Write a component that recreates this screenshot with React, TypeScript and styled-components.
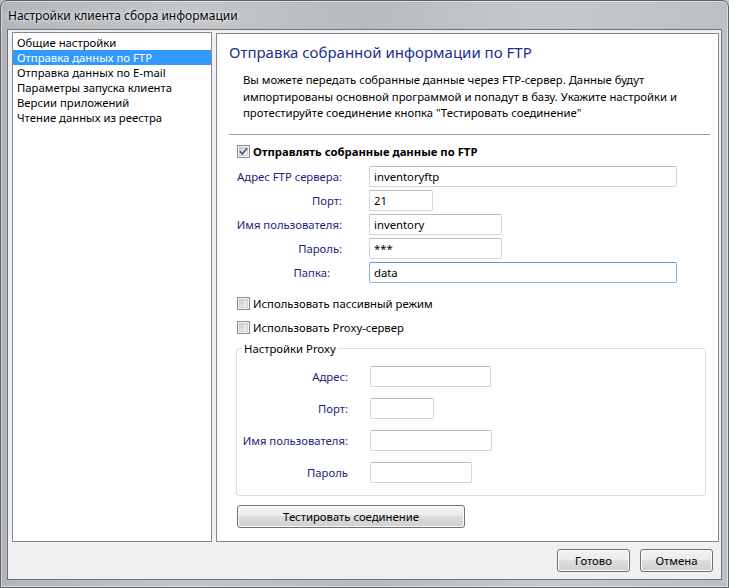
import React from "react";
import styled, { createGlobalStyle } from "styled-components";

const Global = createGlobalStyle`
  html, body { margin: 0; padding: 0; background: #bcc0c4; }
  body { font-family: "Noto Sans", "Open Sans", sans-serif; font-size: 11.3px; color: #000; }
  #root { width: 729px; height: 588px; }
  * { box-sizing: border-box; }
`;

const Window = styled.div`
  width: 729px;
  height: 588px;
  border: 1px solid #5f6468;
  border-radius: 7px 7px 0 0;
  background: linear-gradient(90deg, #b2b6ba 0%, #c3c6c9 25%, #b7bbbf 50%, #c6c9cc 75%, #bcc0c3 100%);
  box-shadow: inset 0 0 0 1px rgba(255, 255, 255, 0.45);
  display: flex;
  flex-direction: column;
  padding: 0 6px 7px 6px;
`;

const TitleBar = styled.div`
  height: 28px;
  display: flex;
  align-items: center;
  padding-left: 1px;
  font-size: 12px;
  color: #000;
  text-shadow: 0 0 6px rgba(255, 255, 255, 0.95), 0 0 2px rgba(255, 255, 255, 0.8);
`;

const Client = styled.div`
  flex: 1;
  border: 1px solid #6f7377;
  background: #f0f0f0;
  display: flex;
  flex-direction: column;
  padding: 2px 2px 0 4px;
`;

const Main = styled.div`
  height: 510px;
  display: flex;
  gap: 4px;
`;

const List = styled.div`
  width: 200px;
  border: 1px solid #828790;
  background: #fff;
  padding-top: 2px;
`;

const ListItem = styled.div<{ $selected?: boolean }>`
  height: 15px;
  line-height: 15px;
  padding-left: 4px;
  white-space: nowrap;
  background: ${(p) => (p.$selected ? "#3399ff" : "transparent")};
  color: ${(p) => (p.$selected ? "#fff" : "#000")};
`;

const Panel = styled.div`
  flex: 1;
  margin-top: 1px;
  border: 1px solid #828790;
  background: #fff;
  display: flex;
  flex-direction: column;
`;

const Heading = styled.div`
  margin: 8px 0 0 12px;
  font-size: 15px;
  line-height: 20px;
  color: #1b2f8f;
`;

const Description = styled.div`
  margin: 10px 0 0 26px;
  line-height: 16.5px;
  white-space: nowrap;
`;

const Separator = styled.div`
  margin: 12px 8px 0 12px;
  height: 1px;
  background: #a0a0a0;
`;

const CheckRow = styled.div<{ $top: number; $bold?: boolean }>`
  display: flex;
  align-items: center;
  gap: 3px;
  height: 16px;
  margin: ${(p) => p.$top}px 0 0 20px;
  font-weight: ${(p) => (p.$bold ? 700 : 400)};
  white-space: nowrap;
`;

const FormGrid = styled.div<{ $label: number; $gap: number; $rowGap: number; $top?: number }>`
  display: grid;
  grid-template-columns: ${(p) => p.$label}px auto;
  column-gap: ${(p) => p.$gap}px;
  row-gap: ${(p) => p.$rowGap}px;
  grid-auto-rows: 21px;
  margin-top: ${(p) => p.$top ?? 0}px;
  justify-items: start;
`;

const FieldLabel = styled.label<{ $inset?: number }>`
  justify-self: end;
  align-self: center;
  padding-right: ${(p) => p.$inset ?? 0}px;
  color: #1e1e7c;
  white-space: nowrap;
`;

const TextBox = styled.input<{ $w: number; $focus?: boolean }>`
  width: ${(p) => p.$w}px;
  height: 21px;
  margin: 0;
  padding: 0 4px;
  font: inherit;
  color: #000;
  background: #fff;
  border: 1px solid ${(p) => (p.$focus ? "#7eb4ea" : "#d3d7dd")};
  border-top-color: ${(p) => (p.$focus ? "#569de5" : "#b9bdc4")};
  border-radius: 2px;
  outline: none;
`;

const Group = styled.fieldset`
  margin: 5px 12px 0 19px;
  padding: 9px 0 12px 0;
  border: 1px solid #d5dfe5;
  border-radius: 3px;
  min-width: 0;
`;

const Legend = styled.legend`
  margin-left: 5px;
  padding: 0 2px;
  line-height: 16px;
`;

const Button = styled.button<{ $w: number }>`
  width: ${(p) => p.$w}px;
  height: 23px;
  padding: 0;
  font: inherit;
  color: #000;
  border: 1px solid #707070;
  border-radius: 3px;
  background: linear-gradient(#f2f2f2 0%, #ebebeb 50%, #dddddd 50%, #cfcfcf 100%);
  box-shadow: inset 0 0 0 1px #fcfcfc;
`;

const TestButton = styled(Button)`
  margin: 9px 0 0 20px;
`;

const Footer = styled.div`
  flex: 1;
  display: flex;
  justify-content: flex-end;
  align-items: flex-start;
  gap: 10px;
  padding: 7px 6px 0 0;
`;

const CheckBox = ({ checked }: { checked?: boolean }) => (
  <svg width="13" height="13" viewBox="0 0 13 13" style={{ flex: "none" }}>
    <defs>
      <linearGradient id={checked ? "cbg1" : "cbg0"} x1="0" y1="0" x2="1" y2="1">
        <stop offset="0" stopColor="#c6cad0" />
        <stop offset="1" stopColor="#f7f7f7" />
      </linearGradient>
    </defs>
    <rect x="0.5" y="0.5" width="12" height="12" fill="#f4f4f4" stroke="#8e8f8f" />
    <rect x="2.5" y="2.5" width="8" height="8" fill={`url(#${checked ? "cbg1" : "cbg0"})`} stroke="#b8bcc2" strokeWidth="0.6" />
    {checked && (
      <path d="M3 6.3 L5.3 9 L10 3.3" fill="none" stroke="#4a5c88" strokeWidth="1.7" strokeLinejoin="round" />
    )}
  </svg>
);

const items = [
  "Общие настройки",
  "Отправка данных по FTP",
  "Отправка данных по E-mail",
  "Параметры запуска клиента",
  "Версии приложений",
  "Чтение данных из реестра",
];

export default function App() {
  return (
    <>
      <Global />
      <Window>
        <TitleBar>Настройки клиента сбора информации</TitleBar>
        <Client>
          <Main>
            <List>
              {items.map((t, i) => (
                <ListItem key={t} $selected={i === 1}>
                  {t}
                </ListItem>
              ))}
            </List>
            <Panel>
              <Heading>Отправка собранной информации по FTP</Heading>
              <Description>
                Вы можете передать собранные данные через FTP-сервер. Данные будут
                <br />
                импортированы основной программой и попадут в базу. Укажите настройки и
                <br />
                протестируйте соединение кнопка "Тестировать соединение"
              </Description>
              <Separator />
              <CheckRow $top={9} $bold>
                <CheckBox checked />
                Отправлять собранные данные по FTP
              </CheckRow>
              <FormGrid $label={125} $gap={27} $rowGap={3} $top={6}>
                <FieldLabel>Адрес FTP сервера:</FieldLabel>
                <TextBox $w={308} defaultValue="inventoryftp" readOnly />
                <FieldLabel>Порт:</FieldLabel>
                <TextBox $w={64} defaultValue="21" readOnly />
                <FieldLabel>Имя пользователя:</FieldLabel>
                <TextBox $w={133} defaultValue="inventory" readOnly />
                <FieldLabel>Пароль:</FieldLabel>
                <TextBox $w={133} defaultValue="***" readOnly />
                <FieldLabel $inset={12}>Папка:</FieldLabel>
                <TextBox $w={308} defaultValue="data" readOnly $focus />
              </FormGrid>
              <CheckRow $top={13}>
                <CheckBox />
                Использовать пассивный режим
              </CheckRow>
              <CheckRow $top={8}>
                <CheckBox />
                Использовать Proxy-сервер
              </CheckRow>
              <Group>
                <Legend>Настройки Proxy</Legend>
                <FormGrid $label={111} $gap={22} $rowGap={11}>
                  <FieldLabel>Адрес:</FieldLabel>
                  <TextBox $w={121} readOnly />
                  <FieldLabel>Порт:</FieldLabel>
                  <TextBox $w={64} readOnly />
                  <FieldLabel>Имя пользователя:</FieldLabel>
                  <TextBox $w={122} readOnly />
                  <FieldLabel>Пароль</FieldLabel>
                  <TextBox $w={102} readOnly />
                </FormGrid>
              </Group>
              <TestButton $w={228}>Тестировать соединение</TestButton>
            </Panel>
          </Main>
          <Footer>
            <Button $w={73}>Готово</Button>
            <Button $w={73}>Отмена</Button>
          </Footer>
        </Client>
      </Window>
    </>
  );
}
